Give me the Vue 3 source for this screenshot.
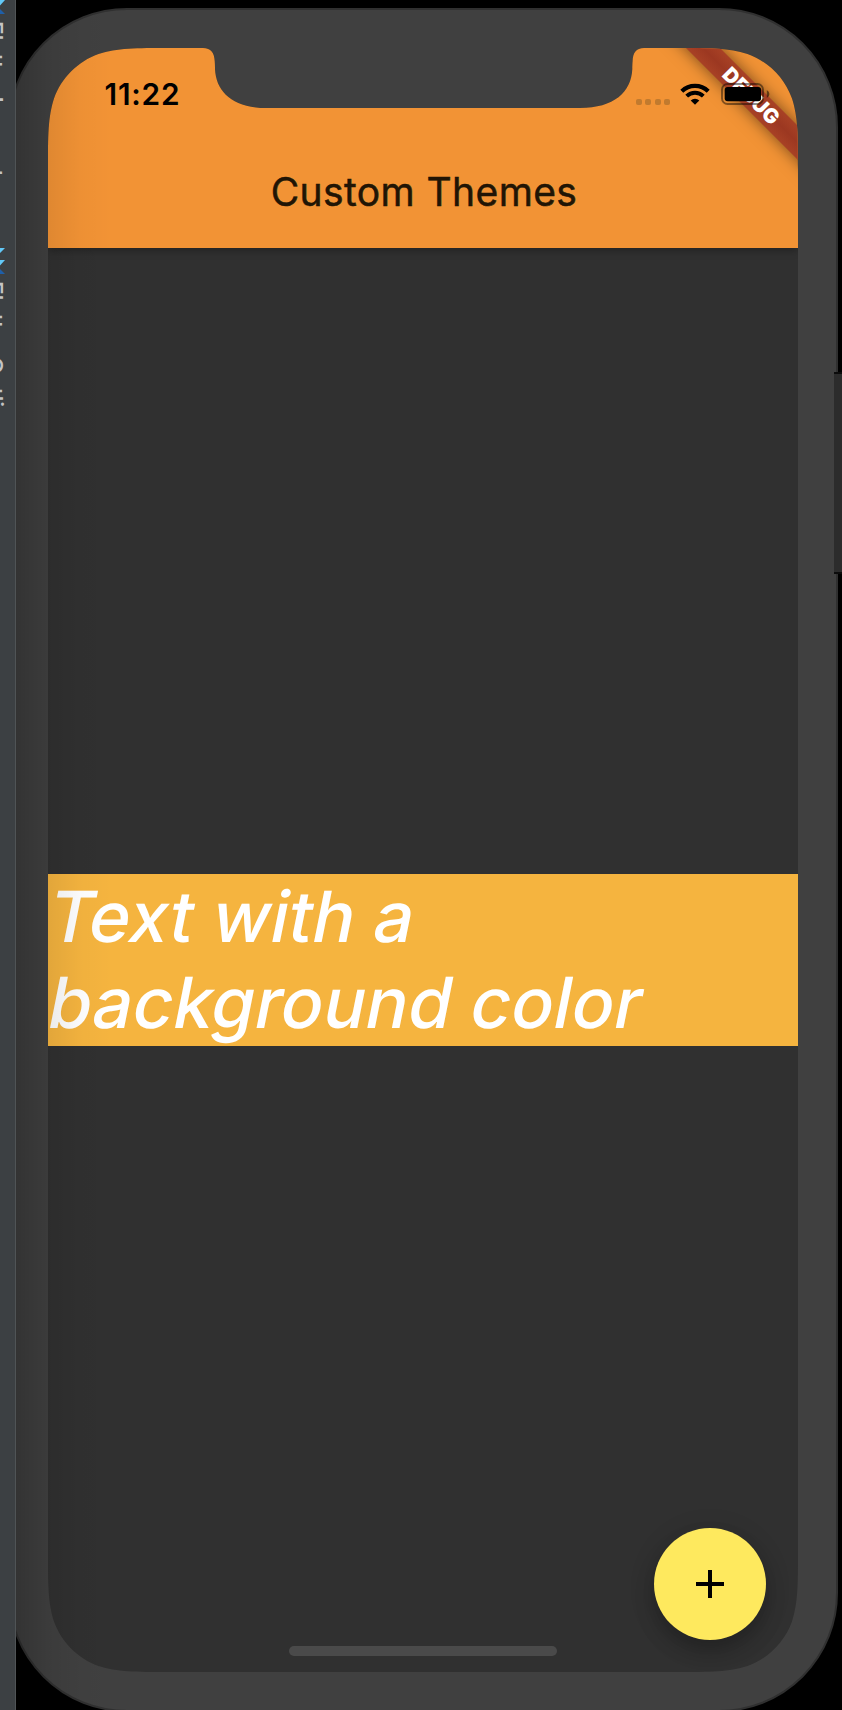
<script setup>
const panels = [
  { name: 'Flutter Inspector', cls: 'first' },
  { name: 'Flutter Outline', cls: 'second' },
]
const bannerLines = ['Text with a', 'background color']
const signalDots = [0, 1, 2, 3]
</script>

<template>
  <main class="desktop">
    <div class="phone">
      <div class="screen">
        <header class="app-bar">
          <div class="status">
            <time class="clock">11:22</time>
            <div class="indicators">
              <div class="signal"><i v-for="d in signalDots" :key="d"></i></div>
              <svg class="wifi" viewBox="0 0 30 22">
                <path d="M1.8 8.2 A19 19 0 0 1 28.2 8.2" fill="none" stroke="#000" stroke-width="4.2" />
                <path d="M6.7 13.1 A12 12 0 0 1 23.3 13.1" fill="none" stroke="#000" stroke-width="4" />
                <path d="M15 21.7 L10.7 17.5 A6.2 6.2 0 0 1 19.3 17.5 Z" />
              </svg>
              <svg class="battery" viewBox="0 0 49 22">
                <rect x="1" y="1" width="41" height="20" rx="5.5" fill="none" stroke="#000" stroke-opacity=".45" stroke-width="1.9" />
                <rect x="3.7" y="3.9" width="36.4" height="14.4" rx="3" />
                <path d="M45.8 7 Q48.4 8.3 48.4 11 Q48.4 13.7 45.8 15 Z" fill-opacity=".5" />
              </svg>
            </div>
          </div>
          <h1 class="title">Custom Themes</h1>
        </header>
        <section class="content">
          <p class="banner"><span v-for="line in bannerLines" :key="line">{{ line }}</span></p>
        </section>
        <div class="ribbon"><span>DEBUG</span></div>
        <button class="fab" aria-label="Add">
          <svg viewBox="0 0 28 28"><path d="M12 0h4v12h12v4H16v12h-4V16H0v-4h12z" /></svg>
        </button>
        <div class="home"></div>
      </div>
    </div>
    <div class="side-button"></div>
    <div class="window-shadow"></div>
    <aside class="dock">
      <div v-for="p in panels" :key="p.name" class="tab" :class="p.cls">
        <svg class="logo" viewBox="0 0 16 26">
          <path d="M-7 0H5L-6 11Z M-7 12H5L-6 24Z" fill="#62c8f7" />
          <path d="M-7 26H5L-1 20Z" fill="#1f5fa8" />
        </svg>
        <span>{{ p.name }}</span>
      </div>
    </aside>
  </main>
</template>

<style>
body { background: #000; }
</style>

<style scoped>
.desktop {
  position: relative;
  display: flow-root;
  width: 842px;
  height: 1710px;
  overflow: hidden;
  background: #000;
  font-family: Inter, "Liberation Sans", sans-serif;
}
.phone {
  box-sizing: border-box;
  width: 830px;
  height: 1704px;
  margin: 8px 0 0 8px;
  padding: 38px;
  border: 2px solid #303030;
  border-radius: 119px;
  background: #404040;
}
.screen {
  position: relative;
  display: flex;
  flex-direction: column;
  width: 750px;
  height: 1624px;
  background: #303030;
  clip-path: path("M122 0 H155 C163 0 166.3 5 166.7 13 C167 17 167 19 167 21 C168 44 185 60 219 60 H532 C566 60 583.3 44 584.3 21 C584.3 19 584.3 17 584.6 13 C585 5 588 0 596 0 H628 C663 0 680.5 0 699.5 6 C720.2 13.5 736.5 29.8 744 50.5 C750 69.5 750 87 750 122 V1502 C750 1537 750 1554.5 744 1573.5 C736.5 1594.2 720.2 1610.5 699.5 1618 C680.5 1624 663 1624 628 1624 H122 C87 1624 69.5 1624 50.5 1618 C29.8 1610.5 13.5 1594.2 6 1573.5 C0 1554.5 0 1537 0 1502 V122 C0 87 0 69.5 6 50.5 C13.5 29.8 29.8 13.5 50.5 6 C69.5 0 87 0 122 0 Z");
}
.app-bar {
  flex: none;
  height: 200px;
  background: #f29335;
  box-shadow: 0 2px 8px rgba(0, 0, 0, .35);
}
.status {
  position: relative;
  z-index: 3;
  display: flex;
  justify-content: space-between;
  height: 88px;
  padding: 0 28px 0 56.5px;
}
.clock {
  padding-top: 28px;
  font-size: 29.8px;
  line-height: 36px;
  font-weight: 600;
  letter-spacing: .8px;
  color: #000;
}
.indicators {
  display: flex;
  align-items: flex-start;
  padding-top: 35px;
}
.signal { display: flex; gap: 3.4px; margin: 15.5px 10px 0 0; }
.signal i { width: 6px; height: 6px; border-radius: 2px; background: #c17a2e; }
.wifi { width: 30px; height: 22px; margin-right: 11px; }
.battery { width: 49px; height: 22px; }
.title {
  margin: 32px 0 0;
  padding-left: 2px;
  text-align: center;
  font-size: 39px;
  line-height: 48px;
  font-weight: 400;
  letter-spacing: .4px;
  color: #211505;
  -webkit-text-stroke: .5px #211505;
}
.content { flex: 1; display: flex; align-items: center; }
.banner {
  width: 750px;
  height: 172px;
  margin: 0;
  background: #f5b43f;
  color: #fff;
  font-size: 70.3px;
  line-height: 86px;
  font-weight: 500;
  letter-spacing: .1px;
  white-space: nowrap;
}
.banner span {
  display: block;
  margin-left: -3.5px;
  transform: skewX(-11.3deg);
  transform-origin: 0 68px;
}
.ribbon {
  position: absolute;
  z-index: 2;
  left: 578px;
  top: 36px;
  width: 250px;
  height: 24px;
  transform: rotate(45deg);
  background: linear-gradient(#a84125, #9c3821 50%, #a84125);
  box-shadow: 0 0 16px rgba(0, 0, 0, .5);
  color: #fff;
  font-size: 20.4px;
  line-height: 24px;
  font-weight: 900;
  text-align: center;
}
.fab {
  position: absolute;
  right: 32px;
  bottom: 32px;
  display: flex;
  align-items: center;
  justify-content: center;
  width: 112px;
  height: 112px;
  padding: 0;
  border: 0;
  border-radius: 50%;
  background: #fee95e;
  box-shadow: 0 12px 20px rgba(0, 0, 0, .2), 0 4px 28px rgba(0, 0, 0, .12);
}
.fab svg { width: 28px; height: 28px; }
.home {
  position: absolute;
  left: 241px;
  bottom: 16px;
  width: 268px;
  height: 10px;
  border-radius: 5px;
  background: #4a4a4a;
}
.side-button {
  position: absolute;
  left: 834px;
  top: 372px;
  box-sizing: border-box;
  width: 10px;
  height: 202px;
  border: solid #0c0c0c;
  border-width: 2px 0;
  background: #2c2c2c;
}
.window-shadow {
  position: absolute;
  left: 16px;
  top: 0;
  width: 96px;
  height: 100%;
  background: linear-gradient(90deg, rgba(0, 0, 0, .2), rgba(0, 0, 0, .08) 33%, rgba(0, 0, 0, .02) 68%, transparent);
}
.dock {
  position: absolute;
  left: 0;
  top: 0;
  box-sizing: border-box;
  width: 16px;
  height: 100%;
  overflow: hidden;
  border-right: 1px solid #505456;
  background: #3c4043;
}
.tab { display: flex; flex-direction: column; height: 248px; }
.first { margin-top: -12px; height: 260px; }
.logo { width: 16px; height: 26px; flex: none; }
.tab span {
  margin: 7px 0 0 -22px;
  width: 32px;
  writing-mode: vertical-rl;
  font-size: 23.2px;
  line-height: 32px;
  font-weight: 500;
  letter-spacing: -.2px;
  color: #c4c4c4;
  white-space: nowrap;
}
</style>
